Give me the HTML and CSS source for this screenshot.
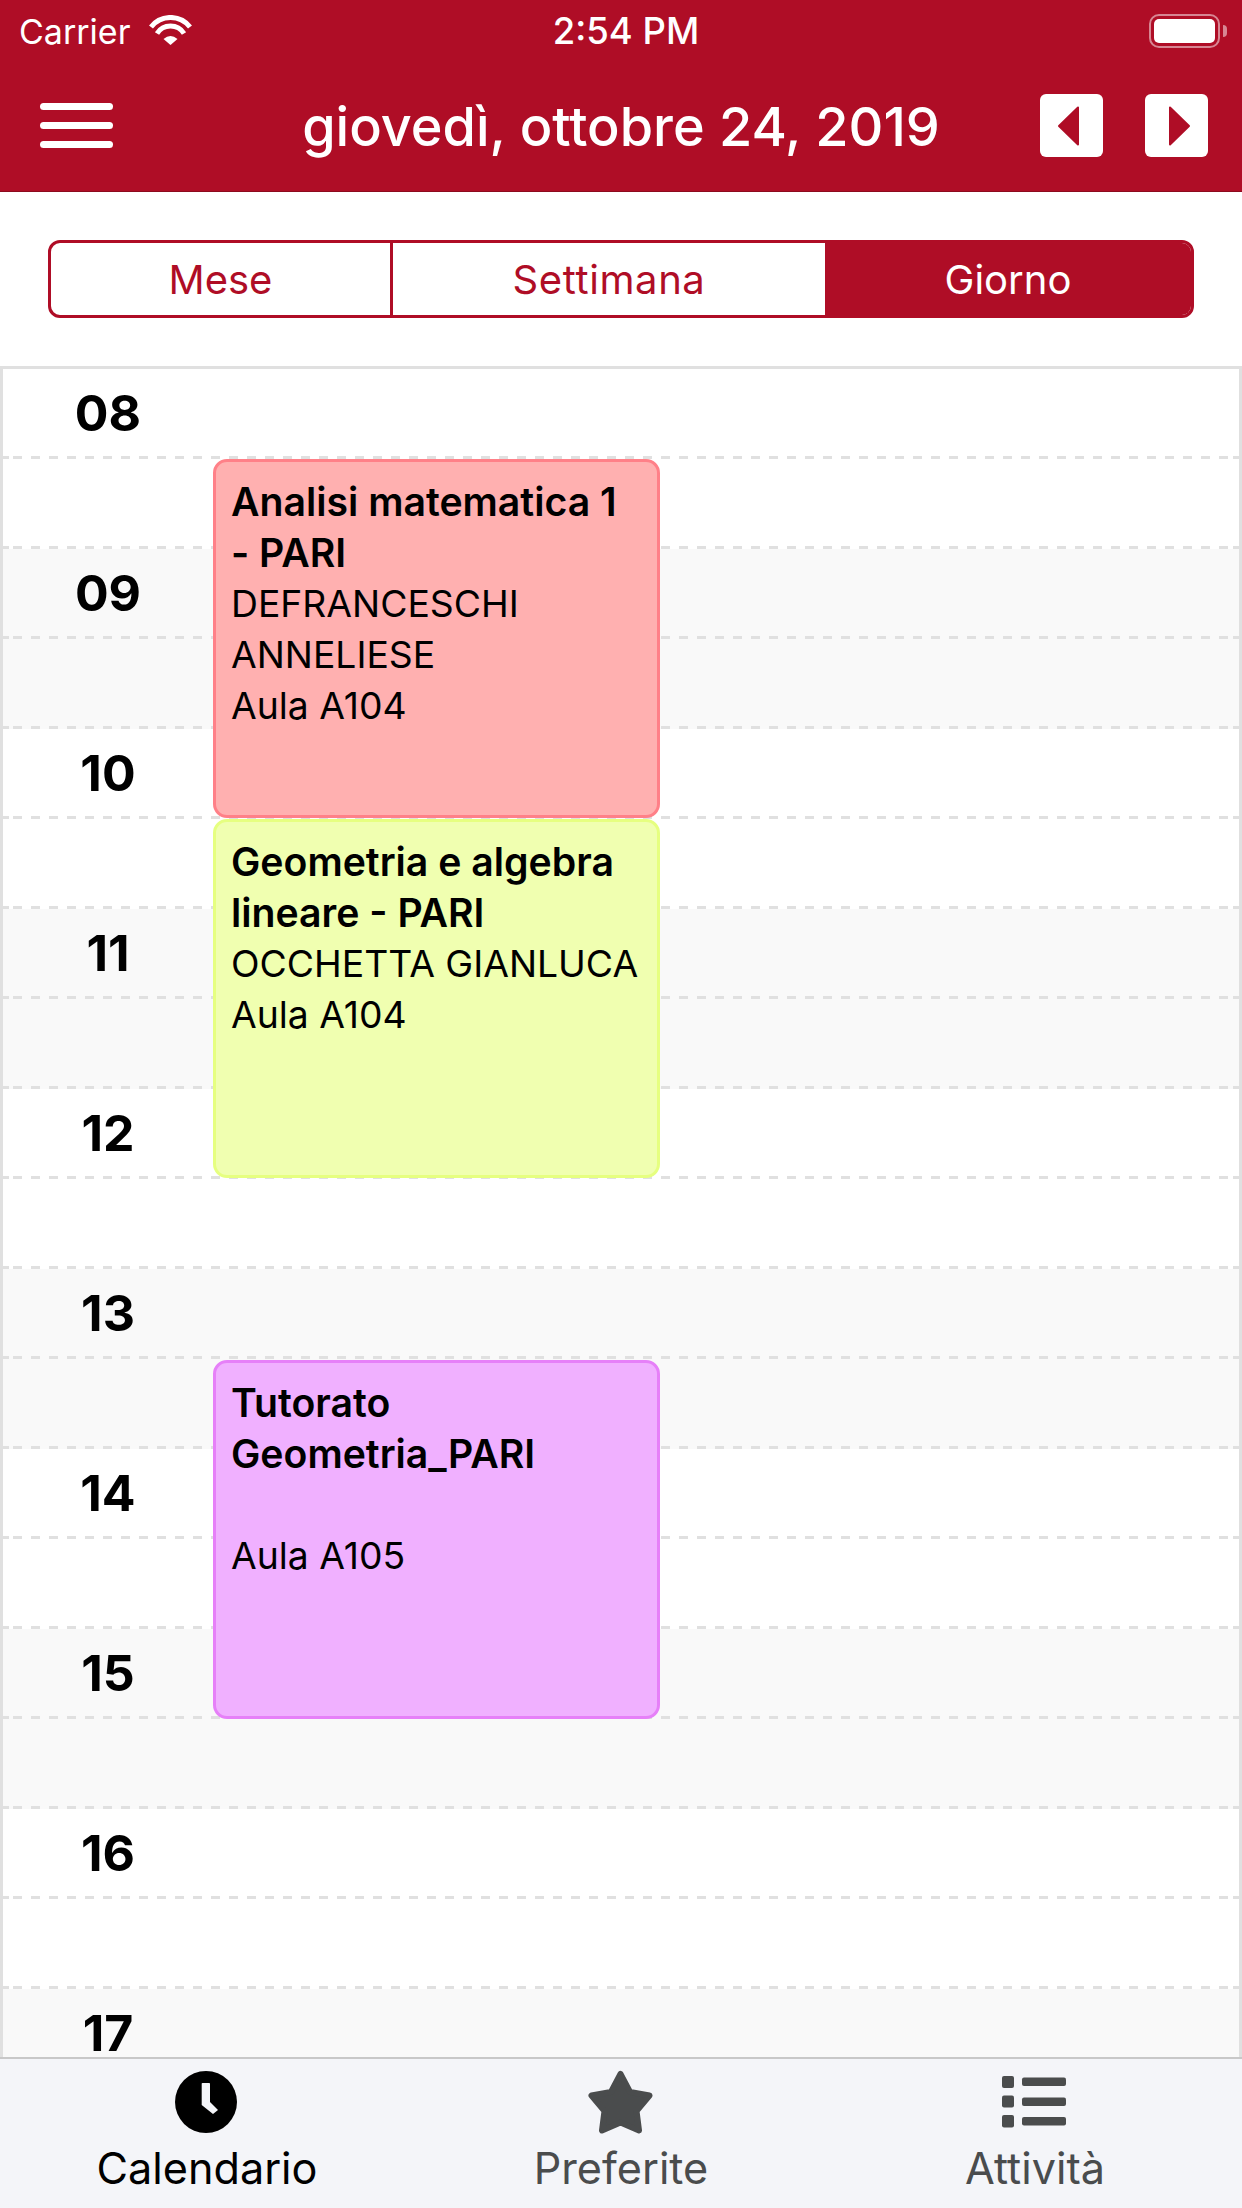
FILE: index.html
```html
<!DOCTYPE html>
<html lang="en">
<head>
    <meta charset="UTF-8">
    <meta name="viewport" content="width=device-width, initial-scale=1.0">
    <title>Calendario</title>
    <link rel="stylesheet" href="styles.css">
</head>
<body>
    <div class="app">
        <header class="topbar">
            <div class="status">
                <div class="status-left">
                    <span>Carrier</span>
                    <svg class="wifi" viewBox="0 0 43 30" width="43" height="30">
                        <path d="M21.5 30 14.500 24Q21.500 18 28.500 24Z" fill="#fff"/>
                        <path d="M8 18.500A15.900 15.900 0 0 1 35 18.500" fill="none" stroke="#fff" stroke-width="5"/>
                        <path d="M2 12A24.700 24.700 0 0 1 41 12" fill="none" stroke="#fff" stroke-width="5"/>
                    </svg>
                </div>
                <div class="status-time">2:54 PM</div>
                <div class="status-right">
                    <div class="battery"><div class="battery-fill"></div></div>
                    <div class="battery-nub"></div>
                </div>
            </div>
            <div class="navrow">
                <div class="burger"><span></span><span></span><span></span></div>
                <h1 class="title">giovedì, ottobre 24, 2019</h1>
                <div class="arrows">
                    <button class="arrow">
                        <svg viewBox="0 0 63 63" width="63" height="63"><path d="M19 32 38 13.500V50.500Z" fill="#af0d26" stroke="#af0d26" stroke-width="2" stroke-linejoin="round"/></svg>
                    </button>
                    <button class="arrow">
                        <svg viewBox="0 0 63 63" width="63" height="63"><path d="M44 32 25 13.500V50.500Z" fill="#af0d26" stroke="#af0d26" stroke-width="2" stroke-linejoin="round"/></svg>
                    </button>
                </div>
            </div>
        </header>

        <div class="segment-wrap">
            <div class="segment">
                <div class="seg seg-month">Mese</div>
                <div class="seg seg-week">Settimana</div>
                <div class="seg seg-day">Giorno</div>
            </div>
        </div>

        <main class="calendar">
            <div class="hour"><div class="slot"><span class="label">08</span></div><div class="slot"></div></div>
            <div class="hour alt"><div class="slot"><span class="label">09</span></div><div class="slot"></div></div>
            <div class="hour"><div class="slot"><span class="label">10</span></div><div class="slot"></div></div>
            <div class="hour alt"><div class="slot"><span class="label">11</span></div><div class="slot"></div></div>
            <div class="hour"><div class="slot"><span class="label">12</span></div><div class="slot"></div></div>
            <div class="hour alt"><div class="slot"><span class="label">13</span></div><div class="slot"></div></div>
            <div class="hour"><div class="slot"><span class="label">14</span></div><div class="slot"></div></div>
            <div class="hour alt"><div class="slot"><span class="label">15</span></div><div class="slot"></div></div>
            <div class="hour"><div class="slot"><span class="label">16</span></div><div class="slot"></div></div>
            <div class="hour alt"><div class="slot"><span class="label">17</span></div><div class="slot"></div></div>

            <div class="event event-red">
                <b>Analisi matematica 1 - PARI</b>
                <p>DEFRANCESCHI ANNELIESE</p>
                <p>Aula A104</p>
            </div>
            <div class="event event-green">
                <b>Geometria e algebra lineare - PARI</b>
                <p>OCCHETTA GIANLUCA</p>
                <p>Aula A104</p>
            </div>
            <div class="event event-purple">
                <b>Tutorato Geometria_PARI</b>
                <p>&nbsp;</p>
                <p>Aula A105</p>
            </div>
        </main>

        <nav class="tabbar">
            <div class="tab tab-active">
                <div class="icon">
                    <svg viewBox="0 0 62 62" width="62" height="62">
                        <circle cx="31" cy="31" r="31" fill="#000"/>
                        <path d="M26.700 12.500Q26.700 12 27.500 12H34.200Q35 12 35 12.800V31L43 39 38 43 26.700 34Z" fill="#f4f5f9"/>
                    </svg>
                </div>
                <span>Calendario</span>
            </div>
            <div class="tab">
                <div class="icon">
                    <svg viewBox="0 0 67 65" width="67" height="65">
                        <path d="M33.500 4 43 22 62.500 25.500 49.500 41 52 60.500 33.500 52.500 15 60.500 17.500 41 4.500 25.500 24 22Z" fill="#4a4c4d" stroke="#4a4c4d" stroke-width="6" stroke-linejoin="round"/>
                    </svg>
                </div>
                <span>Preferite</span>
            </div>
            <div class="tab">
                <div class="icon">
                    <svg viewBox="0 0 64 52" width="64" height="52" fill="#4a4c4d">
                        <rect x="0" y="0" width="12" height="12" rx="2"/>
                        <rect x="20" y="1.500" width="44" height="8.500" rx="2"/>
                        <rect x="0" y="19.500" width="12" height="12" rx="2"/>
                        <rect x="20" y="21.500" width="44" height="8.500" rx="2"/>
                        <rect x="0" y="39" width="12" height="12.500" rx="2"/>
                        <rect x="20" y="41" width="44" height="8.500" rx="2"/>
                    </svg>
                </div>
                <span>Attività</span>
            </div>
        </nav>
    </div>
</body>
</html>
```

FILE: styles.css
```css
* {
    box-sizing: border-box;
}
html, body {
    margin: 0;
    padding: 0;
}
body {
    font-family: Inter, "Noto Sans", "Liberation Sans", sans-serif;
    background: #fff;
    color: #000;
}
.app {
    width: 1242px;
    height: 2208px;
    display: flex;
    flex-direction: column;
    overflow: hidden;
}

/* red header */
.topbar {
    height: 192px;
    background: #af0d26;
    border-bottom: 1px solid #8c0a1e;
    color: #fff;
}
.status {
    height: 60px;
    display: grid;
    grid-template-columns: 1fr auto 1fr;
    align-items: center;
    padding: 2px 15px 0 19px;
    font-size: 34px;
}
.status-left {
    display: flex;
    align-items: center;
    gap: 19px;
}
.wifi {
    margin-top: -2px;
}
.status-time {
    margin-left: 6px;
    font-size: 36.5px;
    font-weight: 500;
}
.status-right {
    display: flex;
    justify-content: flex-end;
    align-items: center;
    gap: 3px;
}
.battery {
    width: 71px;
    height: 34px;
    padding: 3px;
    border: 2px solid rgba(255, 255, 255, 0.5);
    border-radius: 10px;
}
.battery-fill {
    height: 100%;
    background: #fff;
    border-radius: 5px;
}
.battery-nub {
    width: 4px;
    height: 12px;
    background: rgba(255, 255, 255, 0.5);
    border-radius: 0 4px 4px 0;
}
.navrow {
    height: 131px;
    display: grid;
    grid-template-columns: 1fr auto 1fr;
    align-items: center;
    padding: 0 34px;
}
.burger {
    width: 73px;
    margin-left: 6px;
    display: flex;
    flex-direction: column;
    gap: 12px;
}
.burger span {
    height: 7px;
    background: #fff;
    border-radius: 4px;
}
.title {
    margin: 2px 0 0;
    font-size: 54px;
    font-weight: 500;
}
.arrows {
    display: flex;
    justify-content: flex-end;
    gap: 42px;
}
.arrow {
    width: 63px;
    height: 63px;
    padding: 0;
    border: none;
    border-radius: 6px;
    background: #fff;
}
.arrow svg {
    display: block;
}

/* Mese / Settimana / Giorno */
.segment-wrap {
    height: 174px;
    padding: 48px 48px 0;
}
.segment {
    height: 78px;
    display: flex;
    border: 3px solid #af0d26;
    border-radius: 12px;
    overflow: hidden;
    color: #af0d26;
    font-size: 40px;
}
.seg {
    display: flex;
    align-items: center;
    justify-content: center;
}
.seg-month {
    width: 342px;
    border-right: 3px solid #af0d26;
}
.seg-week {
    width: 432px;
    letter-spacing: 0.6px;
}
.seg-day {
    flex: 1;
    background: #af0d26;
    color: #fff;
}

/* day grid */
.calendar {
    position: relative;
    flex: 1;
    min-height: 0;
    overflow: hidden;
    border: 3px solid #e0e0e0;
    border-bottom: none;
}
.hour {
    height: 180px;
}
.hour.alt {
    background: #f9f9f9;
}
.slot {
    height: 90px;
    background:
        linear-gradient(#e0e0e0, #e0e0e0) left bottom / 6px 3px no-repeat,
        linear-gradient(#e0e0e0, #e0e0e0) right bottom / 6px 3px no-repeat,
        repeating-linear-gradient(90deg, #e0e0e0 0 1px, transparent 1px 10px, #e0e0e0 10px 18px) left bottom / 100% 3px no-repeat;
}
.label {
    display: flex;
    align-items: center;
    justify-content: center;
    width: 210px;
    height: 87px;
    font-size: 50px;
    font-weight: 700;
}
.event {
    position: absolute;
    left: 210px;
    width: 447px;
    height: 359px;
    padding: 14px 18px 0 15px;
    border: 3px solid;
    border-radius: 14px;
    font-size: 37.3px;
    line-height: 51px;
}
.event b {
    display: block;
    font-size: 39.2px;
    font-weight: 600;
}
.event p {
    margin: 0;
}
.event-red {
    top: 90px;
    background: #ffb0b0;
    border-color: #ff8088;
}
.event-green {
    top: 450px;
    background: #f0ffb0;
    border-color: #e6ff80;
}
.event-purple {
    top: 991px;
    background: #f0b0ff;
    border-color: #e680f8;
}

/* bottom tabs */
.tabbar {
    height: 151px;
    display: flex;
    background: #f4f5f9;
    border-top: 2px solid #c8c8c8;
    color: #4a4c4d;
    font-size: 43.2px;
}
.tab {
    flex: 1;
    display: flex;
    flex-direction: column;
    align-items: center;
    padding-top: 10px;
}
.icon {
    height: 66px;
    display: flex;
    align-items: center;
    margin-left: -2px;
}
.icon svg {
    display: block;
}
.tab span {
    margin-top: 7px;
}
.tab-active {
    color: #000;
}
```
